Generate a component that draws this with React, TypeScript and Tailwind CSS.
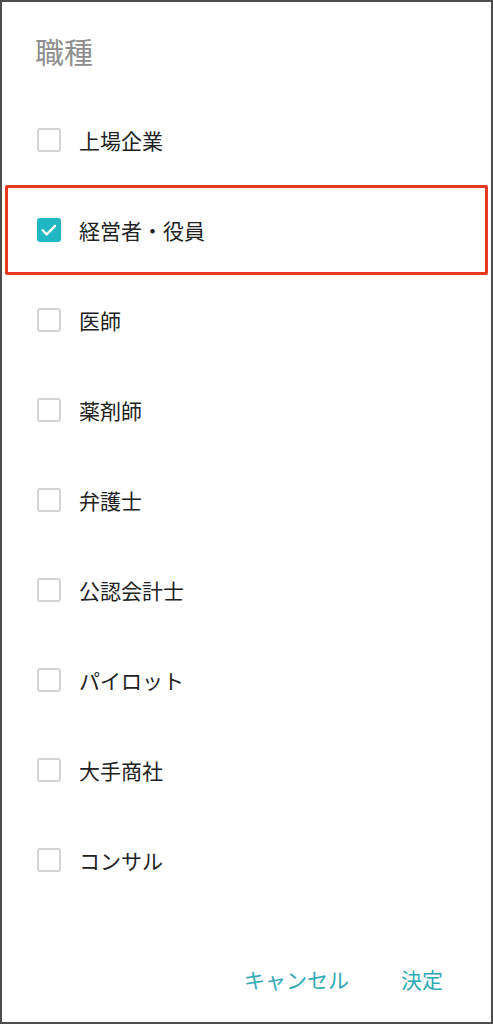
import React from "react";

const items = [
  { label: "上場企業", checked: false },
  { label: "経営者・役員", checked: true, highlight: true },
  { label: "医師", checked: false },
  { label: "薬剤師", checked: false },
  { label: "弁護士", checked: false },
  { label: "公認会計士", checked: false },
  { label: "パイロット", checked: false },
  { label: "大手商社", checked: false },
  { label: "コンサル", checked: false },
];

function Box({ checked }: { checked: boolean }) {
  if (checked) {
    return (
      <div className="w-[24px] h-[24px] rounded-[3px] bg-[#20b6c4] flex items-center justify-center shrink-0">
        <svg width="20" height="20" viewBox="0 0 24 24" fill="none">
          <path d="M4.5 12.5l4.8 4.8 10-10.3" stroke="#ffffff" strokeWidth="2.8" strokeLinecap="round" strokeLinejoin="round" />
        </svg>
      </div>
    );
  }
  return <div className="w-[24px] h-[24px] rounded-[3px] border-2 border-[#d2d4d6] bg-white shrink-0" />;
}

export default function App() {
  return (
    <div
      className="w-[493px] h-[1024px] border-2 border-[#4d4d4d] bg-white flex flex-col"
      style={{ fontFamily: '"Noto Sans CJK JP", "Noto Sans", sans-serif' }}
    >
      <div className="pt-[27px] pl-[33px] text-[29px] leading-[44px] text-[#8e8e8e]">職種</div>
      <div className="mt-[22px] flex flex-col">
        {items.map((it) => (
          <div key={it.label} className="relative h-[90px] flex items-center pl-[35px]">
            <Box checked={it.checked} />
            <span className="ml-[18px] text-[21px] leading-[30px] text-[#212121]">{it.label}</span>
            {it.highlight && (
              <div className="absolute left-[3px] right-[3px] top-0 bottom-0 border-[3px] border-[#e8391f] rounded-[2px]" />
            )}
          </div>
        ))}
      </div>
      <div className="flex-1" />
      <div className="flex justify-end items-center gap-[52px] pr-[48px] pb-[28px] text-[21px] leading-[30px] text-[#2fa9b4]">
        <span>キャンセル</span>
        <span>決定</span>
      </div>
    </div>
  );
}
